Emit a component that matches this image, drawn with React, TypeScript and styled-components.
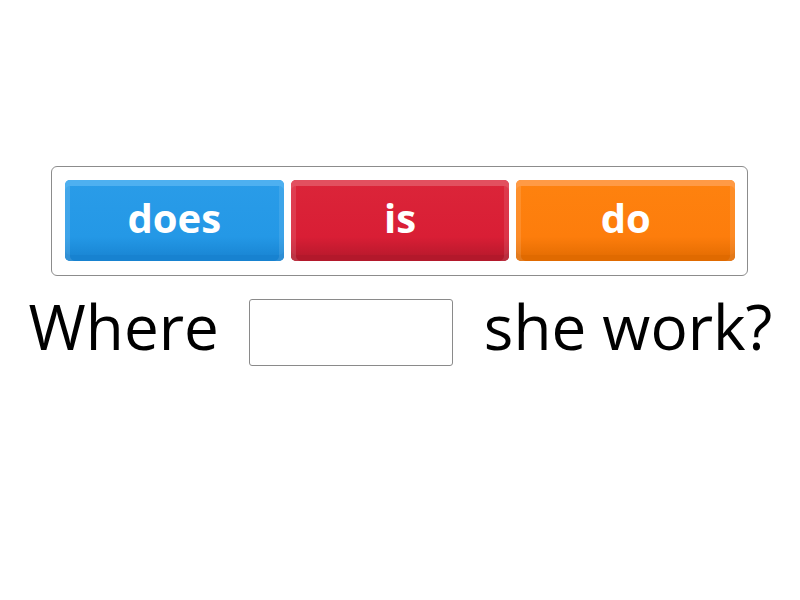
import React from "react";
import styled, { createGlobalStyle } from "styled-components";

const GlobalStyle = createGlobalStyle`
  html, body {
    margin: 0;
    padding: 0;
    background: #ffffff;
  }
  body {
    font-family: "Open Sans", "Noto Sans", sans-serif;
  }
`;

const palette = {
  blue: { face: "#2498e6", top: "#4eb0f0", bottom: "#1782d0", base: "#2a9ce8" },
  red: { face: "#d91e35", top: "#e2505f", bottom: "#b3182b", base: "#db2539" },
  orange: { face: "#fd7d0c", top: "#ff9a45", bottom: "#e06a00", base: "#fe820f" },
};

type Tone = keyof typeof palette;

const Page = styled.main`
  width: 800px;
  height: 600px;
  display: flex;
  flex-direction: column;
  align-items: center;
  padding-top: 166px;
  box-sizing: border-box;
`;

const Tray = styled.div`
  width: 697px;
  height: 110px;
  box-sizing: border-box;
  border: 1px solid #8c8c8c;
  border-radius: 6px;
  padding: 13px 12px 13px 13px;
  margin-right: 1px;
  display: flex;
  gap: 7px;
`;

const Tile = styled.button<{ $tone: Tone }>`
  flex: 1;
  height: 81px;
  border: none;
  border-radius: 5px;
  padding: 0 0 6px;
  color: #ffffff;
  font-family: "Open Sans", "Noto Sans", sans-serif;
  font-weight: 700;
  font-size: 40px;
  line-height: 1;
  cursor: pointer;
  background: linear-gradient(
    ${(p) => palette[p.$tone].base},
    ${(p) => palette[p.$tone].face} 70%,
    ${(p) => palette[p.$tone].bottom}
  );
  box-shadow:
    inset 0 6px 0 ${(p) => palette[p.$tone].top},
    inset 5px 0 0 rgba(255, 255, 255, 0.12),
    inset -5px 0 0 rgba(255, 255, 255, 0.1),
    inset 0 -6px 0 ${(p) => palette[p.$tone].bottom};
`;

const Sentence = styled.div`
  margin-top: 23px;
  margin-left: 1px;
  display: flex;
  align-items: flex-start;
  gap: 31px;
  font-size: 62px;
  color: #000000;
  line-height: 54px;
`;

const Word = styled.span`
  display: block;
`;

const Blank = styled.div`
  width: 204px;
  height: 67px;
  box-sizing: border-box;
  border: 1px solid #8a8a8a;
  border-radius: 3px;
  background: #ffffff;
  margin: 0 0 0 -1px;
`;

export default function App() {
  return (
    <>
      <GlobalStyle />
      <Page>
        <Tray>
          <Tile $tone="blue">does</Tile>
          <Tile $tone="red">is</Tile>
          <Tile $tone="orange">do</Tile>
        </Tray>
        <Sentence>
          <Word>Where</Word>
          <Blank />
          <Word>she work?</Word>
        </Sentence>
      </Page>
    </>
  );
}
